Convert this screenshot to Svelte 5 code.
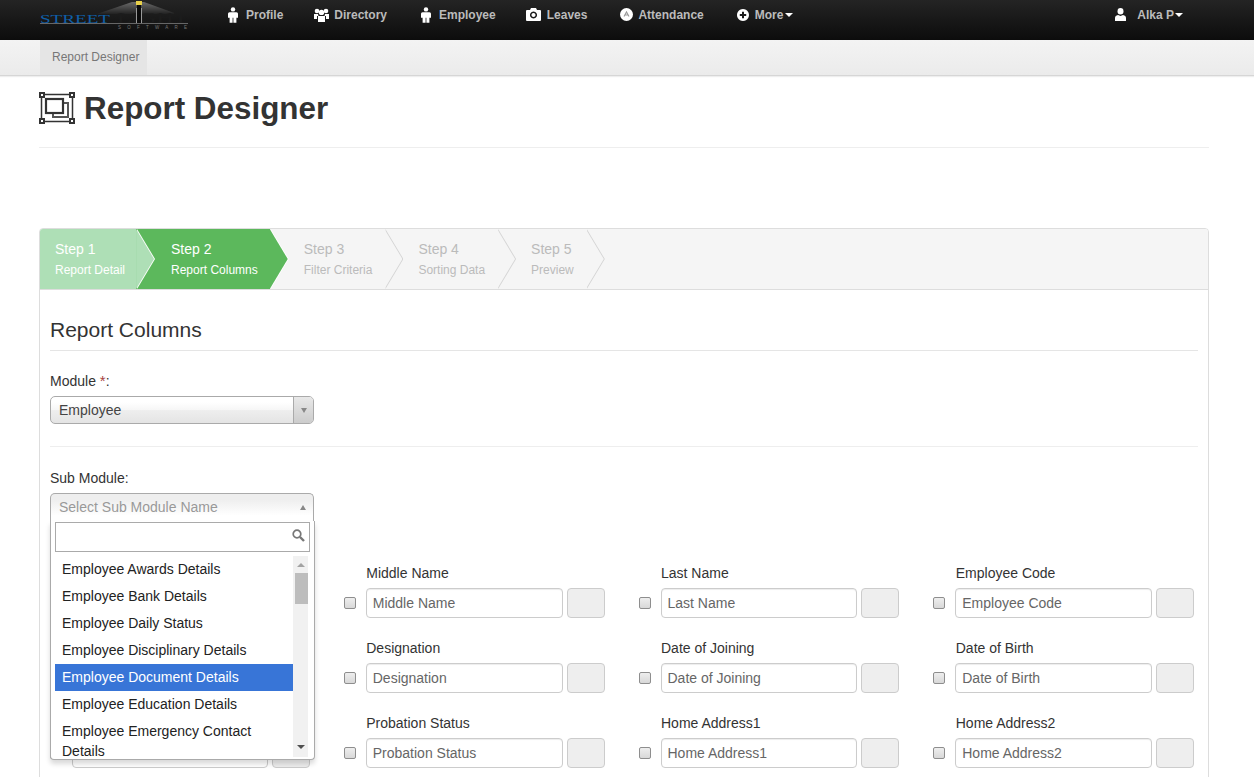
<script>
  const steps = [
    { n: 'Step 1', label: 'Report Detail', state: 'done' },
    { n: 'Step 2', label: 'Report Columns', state: 'active' },
    { n: 'Step 3', label: 'Filter Criteria', state: 'todo' },
    { n: 'Step 4', label: 'Sorting Data', state: 'todo' },
    { n: 'Step 5', label: 'Preview', state: 'todo' }
  ];

  // first column sits behind the open dropdown, its labels can't be seen
  const fields = [
    '', 'Middle Name', 'Last Name', 'Employee Code',
    '', 'Designation', 'Date of Joining', 'Date of Birth',
    '', 'Probation Status', 'Home Address1', 'Home Address2'
  ];

  const subModules = [
    'Employee Awards Details',
    'Employee Bank Details',
    'Employee Daily Status',
    'Employee Disciplinary Details',
    'Employee Document Details',
    'Employee Education Details',
    'Employee Emergency Contact Details'
  ];
</script>

<header class="topbar">
  <svg class="logo" width="148" height="30" viewBox="0 0 148 30" aria-label="Street Light Software">
    <defs>
      <linearGradient id="beam" x1="0" y1="0" x2="0" y2="1">
        <stop offset="0" stop-color="#6a6a6a" />
        <stop offset="1" stop-color="#222" />
      </linearGradient>
    </defs>
    <polygon points="92,2 104,2 137,14 57,14" fill="url(#beam)" />
    <text x="0" y="23" class="logo-blue" textLength="70" lengthAdjust="spacingAndGlyphs">STREET</text>
    <text x="77" y="23" class="logo-dark" textLength="71" lengthAdjust="spacingAndGlyphs">LIGHT</text>
    <rect x="0" y="23" width="148" height="1" fill="#666" />
    <rect x="97" y="5" width="4" height="18" fill="#0a0a0a" />
    <rect x="96" y="8" width="1" height="15" fill="#999" />
    <rect x="101" y="8" width="1" height="15" fill="#999" />
    <rect x="96" y="1" width="6" height="4" fill="#e8d04a" />
    <text x="78" y="29" class="logo-soft" textLength="69" lengthAdjust="spacing">SOFTWARE</text>
  </svg>

  <nav class="menu">
    <a href="#p" class="item"><svg width="10" height="16" viewBox="0 0 10 16"><circle cx="5" cy="2.400" r="2.200" /><path d="M1.500 5.200h7q1.500 0 1.500 1.500v4H8.400v5H5.400v-5h-.8v5H1.600v-5H0v-4q0-1.500 1.500-1.500z" /></svg><span>Profile</span></a>
    <a href="#d" class="item tight"><svg width="15" height="14" viewBox="0 0 15 14"><circle cx="3" cy="3" r="2.300" /><circle cx="12" cy="3" r="2.300" /><circle cx="7.500" cy="4.400" r="2.700" /><path d="M0 6h4l.5 2H3v3H0zM15 6h-4l-.5 2H12v3h3zM4 8h7v6H4z" /></svg><span>Directory</span></a>
    <a href="#e" class="item"><svg width="10" height="16" viewBox="0 0 10 16"><circle cx="5" cy="2.400" r="2.200" /><path d="M1.500 5.200h7q1.500 0 1.500 1.500v4H8.400v5H5.400v-5h-.8v5H1.600v-5H0v-4q0-1.500 1.500-1.500z" /></svg><span>Employee</span></a>
    <a href="#l" class="item wide"><svg width="15" height="13" viewBox="0 0 15 13"><path fill-rule="evenodd" d="M1 2h3l1-2h5l1 2h3q1 0 1 1v9q0 1-1 1H1q-1 0-1-1V3q0-1 1-1zM7.500 3.500a3.500 3.500 0 1 0 .01 0zM7.500 5a2 2 0 1 1-.01 0z" /></svg><span>Leaves</span></a>
    <a href="#a" class="item tight"><svg width="13" height="13" viewBox="0 0 13 13"><circle cx="6.500" cy="6.500" r="6.500" /><path d="M4 8.500l2.500-4.500L9 8.500M4.800 7h3.400" fill="none" stroke="#999" stroke-width="1.100" /></svg><span>Attendance</span></a>
    <a href="#m" class="item wide"><svg width="12" height="12" viewBox="0 0 12 12"><path fill-rule="evenodd" d="M6 0a6 6 0 1 1-.01 0zM5 2.800v2.200H2.800v2H5v2.200h2V7h2.200V5H7V2.800z" /></svg><span>More<i class="caret more"></i></span></a>
  </nav>

  <a href="#u" class="item user"><svg width="11" height="13" viewBox="0 0 11 13"><ellipse cx="5.500" cy="3.300" rx="3" ry="3.300" /><path d="M0 13v-3q0-2.500 3-3l2.500 1L8 7q3 .5 3 3v3z" /></svg><span>Alka P<i class="caret"></i></span></a>
</header>

<div class="subbar">
  <a href="#r" class="subtab">Report Designer</a>
</div>

<main class="page">
  <div class="title">
    <svg width="36" height="32" viewBox="0 0 36 32" fill="none" stroke="#333">
      <rect x="2.500" y="2.500" width="31" height="27" stroke-width="1.500" />
      <path d="M14 21v4h15V11h-5" stroke-width="2" stroke="#555" />
      <rect x="7" y="7" width="17" height="14" stroke-width="2.200" />
      <rect x="1" y="1" width="4" height="4" fill="#fff" stroke-width="2" />
      <rect x="31" y="1" width="4" height="4" fill="#fff" stroke-width="2" />
      <rect x="1" y="27" width="4" height="4" fill="#fff" stroke-width="2" />
      <rect x="31" y="27" width="4" height="4" fill="#fff" stroke-width="2" />
    </svg>
    <h1>Report Designer</h1>
  </div>

  <section class="panel">
    <ul class="steps">
      {#each steps as step}
        <li class="step {step.state}">
          <span class="step-no">{step.n}</span>
          <small>{step.label}</small>
        </li>
      {/each}
    </ul>

    <div class="panel-body">
      <h3>Report Columns</h3>

      <div class="form-group first">
        <label for="module">Module <span class="req">*</span>:</label>
        <div class="chosen" id="module">
          <span>Employee</span>
          <b class="chosen-arrow"><i></i></b>
        </div>
      </div>

      <div class="form-group second">
        <label for="submodule">Sub Module:</label>
        <div class="chosen open" id="submodule">
          <span>Select Sub Module Name</span>
          <i class="up"></i>
        </div>

        <div class="drop">
          <div class="drop-search">
            <input type="text" />
            <svg width="13" height="13" viewBox="0 0 13 13" fill="none" stroke="#777"><circle cx="5" cy="5" r="3.800" stroke-width="1.700" /><path d="M8 8l4 4" stroke-width="2.400" /></svg>
          </div>
          <div class="drop-body">
            <ul class="results">
              {#each subModules as name, i}
                <li class:hit={i === 4}>{name}</li>
              {/each}
            </ul>
            <div class="scroll">
              <i class="sc-up"></i>
              <div class="thumb"></div>
              <i class="sc-down"></i>
            </div>
          </div>
        </div>
      </div>

      <div class="columns">
        {#each fields as field}
          <div class="col">
            <div class="col-label">{field}</div>
            <div class="col-row">
              <span class="check"></span>
              <input type="text" placeholder={field} />
              <span class="addon"></span>
            </div>
          </div>
        {/each}
      </div>
    </div>
  </section>
</main>

<style>
  :global(body) {
    margin: 0;
    background: #fff;
    font-family: "Liberation Sans", Arial, sans-serif;
    font-size: 14px;
    color: #333;
    overflow: hidden;
  }

  .topbar {
    display: flex;
    height: 40px;
    padding-left: 40px;
    box-sizing: border-box;
    background: linear-gradient(#242424, #0c0c0c);
  }

  .logo {
    flex: none;
    margin-right: 40px;
  }

  .logo-blue {
    font: 12px "Liberation Serif", serif;
    fill: #0f5fa8;
  }

  .logo-dark {
    font: 14px "Liberation Serif", serif;
    fill: #1c1c1c;
  }

  .logo-soft {
    font: 4.500px "Liberation Sans", sans-serif;
    fill: #777;
  }

  .menu {
    display: flex;
    align-items: flex-start;
  }

  .menu .item:nth-child(2) { margin-left: 31px; }
  .menu .item:nth-child(3) { margin-left: 34px; }
  .menu .item:nth-child(4) { margin-left: 30px; }
  .menu .item:nth-child(5) { margin-left: 33px; }
  .menu .item:nth-child(6) { margin-left: 33px; }

  .item {
    display: flex;
    align-items: center;
    gap: 8px;
    height: 29px;
    font-size: 12px;
    font-weight: bold;
    color: #bbb;
    text-decoration: none;
  }

  .item svg {
    fill: #fff;
  }

  .item.wide {
    gap: 6px;
  }

  .item.tight {
    gap: 5px;
  }

  .user {
    margin-left: auto;
    margin-right: 71px;
    gap: 11px;
  }

  .caret {
    display: inline-block;
    width: 0;
    height: 0;
    margin-left: 1px;
    vertical-align: 2px;
    border-top: 4px solid #fff;
    border-left: 4px solid transparent;
    border-right: 4px solid transparent;
  }

  .caret.more {
    margin-left: 2px;
  }

  .subbar {
    height: 35px;
    padding-left: 40px;
    background: linear-gradient(#f3f3f3, #ebebeb);
    border-bottom: 1px solid #d6d6d6;
    box-shadow: 0 1px 1px #eee;
  }

  .subtab {
    display: inline-block;
    height: 35px;
    padding: 0 8px 0 12px;
    line-height: 34px;
    font-size: 12px;
    color: #777;
    text-decoration: none;
    background: #e5e5e5;
  }

  .page {
    padding: 0 45px 0 39px;
  }

  .title {
    display: flex;
    align-items: flex-start;
    gap: 9px;
    height: 70px;
    padding-bottom: 1px;
    margin-bottom: 80px;
    border-bottom: 1px solid #eee;
  }

  .title svg {
    flex: none;
    margin-top: 16px;
  }

  h1 {
    margin: 1px 0 0;
    font-size: 31.400px;
    line-height: 64px;
    color: #333;
  }

  .panel {
    border: 1px solid #ddd;
    border-radius: 4px;
    overflow: hidden;
    height: 700px;
  }

  .steps {
    display: flex;
    height: 60px;
    margin: 0;
    padding: 0;
    list-style: none;
    background: #f5f5f5;
    border-bottom: 1px solid #ddd;
  }

  .step {
    position: relative;
    display: flex;
    flex-direction: column;
    padding: 10px 12px 0 34px;
    height: 60px;
    box-sizing: border-box;
    color: #bbb;
    background: #f5f5f5;
  }

  .step:first-child {
    padding: 10px 11px 0 15px;
  }

  .step:nth-child(2) {
    padding-left: 35px;
  }

  .step:nth-child(1) { z-index: 5; }
  .step:nth-child(2) { z-index: 4; }
  .step:nth-child(3) { z-index: 3; }
  .step:nth-child(4) { z-index: 2; }
  .step:nth-child(5) { z-index: 1; }

  .step::before,
  .step::after {
    content: '';
    position: absolute;
    top: 0;
    left: 100%;
    width: 18px;
    height: 60px;
    clip-path: polygon(0 0, 100% 50%, 0 100%);
  }

  .step::before {
    margin-left: 1px;
    background: #d4d4d4;
  }

  .step::after {
    background: #f5f5f5;
  }

  .step.done,
  .step.done::after {
    background: #aedfb6;
  }

  .step.active,
  .step.active::after {
    background: #5cb85c;
  }

  .step.done,
  .step.active {
    color: #fff;
  }

  .step.done::before,
  .step.active::before {
    background: #fff;
  }

  .step-no {
    line-height: 20px;
  }

  .step small {
    margin-top: 3px;
    font-size: 12px;
    line-height: 17px;
  }

  .panel-body {
    padding: 0 10px;
  }

  h3 {
    margin: 29px 0 0;
    padding-bottom: 9px;
    font-size: 21px;
    font-weight: normal;
    line-height: 22px;
    color: #333;
    border-bottom: 1px solid #e5e5e5;
  }

  .form-group {
    position: relative;
    box-sizing: border-box;
    width: 100%;
  }

  .first {
    padding: 20px 0 22px;
    border-bottom: 1px solid #eee;
  }

  .second {
    height: 116px;
    padding-top: 21px;
  }

  label {
    display: block;
    margin-bottom: 5px;
    line-height: 20px;
  }

  .req {
    color: #a94442;
    font-size: 15px;
  }

  .chosen {
    position: relative;
    display: flex;
    align-items: center;
    box-sizing: border-box;
    width: 264px;
    height: 28px;
    padding-left: 8px;
    color: #444;
    background: linear-gradient(#fff 20%, #f6f6f6 50%, #eee 52%, #e4e4e4);
    border: 1px solid #aaa;
    border-radius: 5px;
  }

  .chosen-arrow {
    position: absolute;
    top: 0;
    right: 0;
    bottom: 0;
    display: flex;
    align-items: center;
    justify-content: center;
    width: 19px;
    background: linear-gradient(#e8e8e8, #ccc);
    border-left: 1px solid #aaa;
    border-radius: 0 4px 4px 0;
  }

  .chosen-arrow i {
    border-top: 5px solid #888;
    border-left: 3px solid transparent;
    border-right: 3px solid transparent;
  }

  .chosen.open {
    padding-bottom: 2px;
    color: #999;
    background: linear-gradient(#eee 20%, #fff 80%);
    border-bottom: none;
    border-radius: 5px 5px 0 0;
  }

  .up {
    position: absolute;
    top: 11px;
    right: 7px;
    border-bottom: 5px solid #888;
    border-left: 3px solid transparent;
    border-right: 3px solid transparent;
  }

  .drop {
    position: absolute;
    z-index: 10;
    top: 74px;
    left: 0;
    box-sizing: border-box;
    width: 265px;
    height: 239px;
    padding: 0 4px;
    background: #fff;
    border: 1px solid #aaa;
    border-top: none;
    border-radius: 0 0 4px 4px;
    box-shadow: 0 4px 5px rgba(0, 0, 0, 0.15);
  }

  .drop-search {
    position: relative;
    height: 35px;
    padding-top: 1px;
    box-sizing: border-box;
  }

  .drop-search input {
    display: block;
    box-sizing: border-box;
    width: 255px;
    height: 30px;
    border: 1px solid #aaa;
    outline: none;
  }

  .drop-search svg {
    position: absolute;
    top: 8px;
    right: 5px;
  }

  .drop-body {
    display: flex;
    align-items: flex-start;
    width: 253px;
  }

  .results {
    flex: 1;
    margin: 0;
    padding: 0;
    list-style: none;
    color: #222;
  }

  .results li {
    padding: 3px 7px 4px;
    line-height: 20px;
  }

  .results li:last-child {
    padding-bottom: 0;
  }

  .results li.hit {
    color: #fff;
    background: #3875d7;
  }

  .scroll {
    position: relative;
    flex: none;
    width: 15px;
    height: 201px;
    background: #f1f1f1;
  }

  .sc-up,
  .sc-down {
    position: absolute;
    left: 4px;
    border-left: 4px solid transparent;
    border-right: 4px solid transparent;
  }

  .sc-up {
    top: 7px;
    border-bottom: 4px solid #a3a3a3;
  }

  .sc-down {
    bottom: 8px;
    border-top: 4px solid #505050;
  }

  .thumb {
    position: absolute;
    top: 17px;
    left: 2px;
    right: 0;
    height: 31px;
    background: #bdbdbd;
  }

  .columns {
    display: grid;
    grid-template-columns: repeat(4, 1fr);
    row-gap: 20px;
    margin: 0 -15px 0 -16px;
  }

  .col {
    padding: 0 19px 0 15px;
  }

  .col:nth-child(4n + 1) {
    padding-left: 16px;
  }

  .col-label {
    min-height: 20px;
    padding-left: 22.500px;
    margin-bottom: 5px;
    line-height: 20px;
  }

  .col-row {
    display: flex;
    align-items: center;
  }

  .check {
    flex: none;
    box-sizing: border-box;
    width: 12px;
    height: 12px;
    margin-right: 10px;
    background: linear-gradient(#eee, #d8d8d8);
    border: 1px solid #8e8e8e;
    border-radius: 2px;
  }

  .col-row input {
    flex: 1;
    min-width: 0;
    box-sizing: border-box;
    height: 30px;
    padding: 0 6px;
    font: 14px "Liberation Sans", Arial, sans-serif;
    background: #fff;
    border: 1px solid #ccc;
    border-radius: 4px;
    box-shadow: inset 0 1px 1px rgba(0, 0, 0, 0.075);
    outline: none;
  }

  .col-row input::placeholder {
    color: #666;
    opacity: 1;
  }

  .addon {
    flex: none;
    box-sizing: border-box;
    width: 38px;
    height: 30px;
    margin-left: 4px;
    background: #eee;
    border: 1px solid #ccc;
    border-radius: 4px;
  }
</style>
